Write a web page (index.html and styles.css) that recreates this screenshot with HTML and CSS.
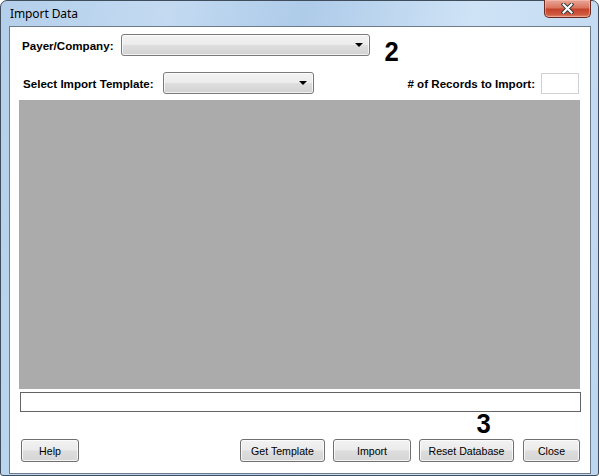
FILE: index.html
```html
<!DOCTYPE html>
<html>
<head>
<meta charset="utf-8">
<link rel="stylesheet" href="styles.css">
</head>
<body>
<div class="window">
  <div class="titlebar">
    <span class="title">Import Data</span>
    <div class="close-btn">
      <svg width="13" height="11" viewBox="0 0 13 11">
        <path d="M2.5 1.5 L10.5 9.5 M10.5 1.5 L2.5 9.5" stroke="#3b3b3b" stroke-width="4" stroke-linecap="square" fill="none"/>
        <path d="M2.5 1.5 L10.5 9.5 M10.5 1.5 L2.5 9.5" stroke="#ffffff" stroke-width="2" stroke-linecap="square" fill="none"/>
      </svg>
    </div>
  </div>
  <div class="client">
    <div class="row row-payer">
      <label class="lbl lbl-payer">Payer/Company:</label>
      <div class="combo combo-payer"><span class="arrow"></span></div>
      <span class="note note-2">2</span>
    </div>
    <div class="row row-template">
      <label class="lbl lbl-template">Select Import Template:</label>
      <div class="combo combo-template"><span class="arrow"></span></div>
      <span class="spacer"></span>
      <label class="lbl lbl-records"># of Records to Import:</label>
      <div class="textbox records-box"></div>
    </div>
    <div class="grid-area"></div>
    <div class="status-box"></div>
    <div class="note-row"><span class="note note-3">3</span></div>
    <div class="buttons">
      <button class="btn btn-help">Help</button>
      <span class="spacer"></span>
      <button class="btn btn-template">Get Template</button>
      <button class="btn btn-import">Import</button>
      <button class="btn btn-reset">Reset Database</button>
      <button class="btn btn-close">Close</button>
    </div>
  </div>
</div>
</body>
</html>
```

FILE: styles.css
```css
html, body {
  margin: 0;
  padding: 0;
  width: 599px;
  height: 476px;
  overflow: hidden;
  background: #ffffff;
}

.window {
  box-sizing: border-box;
  width: 599px;
  height: 476px;
  border: 1px solid #3f4d5c;
  border-radius: 7px 7px 3px 3px;
  padding: 0 7px 1px 8px;
  display: flex;
  flex-direction: column;
  background:
    linear-gradient(100deg, #b4cfeb 0%, #c3daf1 25%, #aecbe9 45%, #cfe3f6 70%, #bcd6ef 100%);
}

.titlebar {
  height: 25px;
  display: flex;
  align-items: flex-start;
  justify-content: space-between;
  padding-left: 1px;
}

.title {
  font-family: "Noto Sans", "Open Sans", sans-serif;
  font-size: 12px;
  color: #000000;
  line-height: 25px;
  letter-spacing: -0.1px;
}

.close-btn {
  box-sizing: border-box;
  width: 47px;
  height: 18px;
  margin-top: -1px;
  border: 1px solid #6a2a22;
  border-top: none;
  border-radius: 0 0 5px 5px;
  background: linear-gradient(#e9a797 0%, #d9765f 45%, #c4432c 55%, #cf5a3f 85%, #e08a70 100%);
  box-shadow: inset 0 0 0 1px rgba(255, 200, 190, 0.5);
  display: flex;
  align-items: center;
  justify-content: center;
}

.client {
  flex: 1;
  box-sizing: border-box;
  border: 1px solid #6d7b8a;
  background: #ffffff;
  padding: 7px 10px 0 9px;
  display: flex;
  flex-direction: column;
}

.row {
  display: flex;
  align-items: center;
}

.lbl {
  font-family: "Liberation Sans", Arial, sans-serif;
  font-weight: bold;
  font-size: 11.6px;
  color: #000000;
  white-space: nowrap;
}

.row-payer {
  height: 22px;
  padding-left: 3px;
}

.lbl-payer {
  width: 99px;
}

.combo {
  box-sizing: border-box;
  height: 22px;
  border: 1px solid #7a7a7a;
  border-radius: 3px;
  background: linear-gradient(#f3f3f3 0%, #ececec 48%, #dedede 52%, #d2d2d2 100%);
  box-shadow: inset 0 0 0 1px rgba(255, 255, 255, 0.7);
  position: relative;
}

.combo-payer {
  width: 249px;
}

.arrow {
  position: absolute;
  right: 6px;
  top: 8px;
  width: 0;
  height: 0;
  border-left: 4px solid transparent;
  border-right: 4px solid transparent;
  border-top: 4px solid #000000;
}

.note {
  font-family: "Liberation Sans", Arial, sans-serif;
  font-weight: bold;
  font-size: 27px;
  color: #000000;
  line-height: 1;
  transform: scaleX(0.95);
}

.note-2 {
  margin-left: 14px;
  margin-top: 15px;
}

.row-template {
  height: 22px;
  margin-top: 16px;
  padding-left: 4px;
}

.lbl-template {
  width: 140px;
}

.combo-template {
  width: 151px;
}

.spacer {
  flex: 1;
}

.lbl-records {
  margin-right: 6px;
}

.textbox {
  box-sizing: border-box;
  border: 1px solid #d0d0d0;
  background: #ffffff;
}

.records-box {
  width: 38px;
  height: 21px;
  margin-right: 1px;
}

.grid-area {
  height: 289px;
  margin-top: 6px;
  background: #ababab;
}

.status-box {
  box-sizing: border-box;
  height: 20px;
  margin: 3px -1px 0 1px;
  border: 1px solid #646464;
  background: #ffffff;
}

.note-row {
  height: 27px;
  display: flex;
  align-items: flex-start;
}

.note-3 {
  margin-left: 457px;
  margin-top: -1px;
}

.buttons {
  display: flex;
  height: 23px;
  padding-left: 2px;
}

.btn {
  box-sizing: border-box;
  height: 23px;
  padding: 0;
  margin: 0;
  border: 1px solid #707070;
  border-radius: 3px;
  background: linear-gradient(#f2f2f2 0%, #ebebeb 48%, #dddddd 52%, #d6d6d6 100%);
  box-shadow: inset 0 0 0 1px rgba(255, 255, 255, 0.75);
  font-family: "Liberation Sans", Arial, sans-serif;
  font-size: 10.6px;
  color: #000000;
  white-space: nowrap;
}

.btn-help { width: 58px; }
.btn-template { width: 85px; }
.btn-import { width: 78px; margin-left: 8px; }
.btn-reset { width: 95px; margin-left: 8px; }
.btn-close { width: 57px; margin-left: 9px; }
```
